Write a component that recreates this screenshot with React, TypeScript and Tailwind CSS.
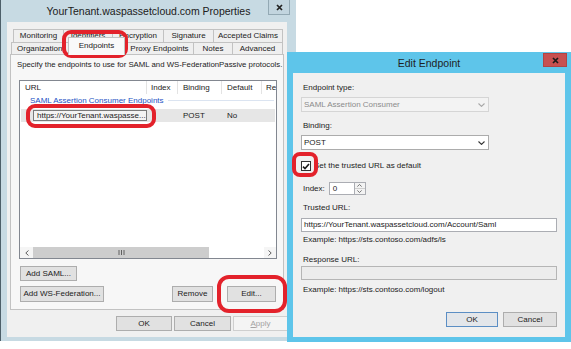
import clsx from "clsx";
import type { ReactNode } from "react";

function CloseGlyph({ className }: { className?: string }) {
  return (
    <svg width="7" height="7" viewBox="0 0 7 7" className={className}>
      <path d="M1 1 L6 6 M6 1 L1 6" stroke="currentColor" strokeWidth="1.7" />
    </svg>
  );
}

function Chevron({ className, up }: { className?: string; up?: boolean }) {
  return (
    <svg width="7" height="4" viewBox="0 0 7 4" className={className}>
      <path
        d={up ? "M0.5 3.5 L3.5 0.6 L6.5 3.5" : "M0.5 0.5 L3.5 3.4 L6.5 0.5"}
        fill="none"
        stroke="currentColor"
        strokeWidth="1.1"
      />
    </svg>
  );
}

function WinButton({
  children,
  className,
  disabled,
  isDefault,
}: {
  children: ReactNode;
  className?: string;
  disabled?: boolean;
  isDefault?: boolean;
}) {
  return (
    <div
      className={clsx(
        "flex h-[15px] shrink-0 items-center justify-center border text-[8px] leading-none",
        isDefault ? "border-[#5b8ec4] bg-[#e3e6ea]" : "border-[#adadad] bg-[#e1e1e1]",
        disabled ? "border-[#cfcfcf] bg-[#f4f4f4] text-[#a3a3a3]" : "text-[#1b1b1b]",
        className
      )}
    >
      {children}
    </div>
  );
}

function Tab({ label, className, active }: { label: string; className?: string; active?: boolean }) {
  return (
    <div
      className={clsx(
        "flex shrink-0 items-center justify-center overflow-hidden whitespace-nowrap border-l border-t border-[#c2c2c2] text-[8px] leading-none",
        active ? "relative z-10 -mb-px h-[18px] border-r bg-[#f9f9f9] pb-[2px]" : "h-full bg-[#efefef]",
        className
      )}
    >
      {label}
    </div>
  );
}

function Select({ value, disabled }: { value: string; disabled?: boolean }) {
  return (
    <div
      className={clsx(
        "flex h-[15px] w-[188px] items-center justify-between border pl-[2px] pr-[3px]",
        disabled ? "border-[#d5d5d5] bg-[#f3f3f3] text-[#8b8b8b]" : "border-[#acacac] bg-white text-[#1b1b1b]"
      )}
    >
      <span>{value}</span>
      <Chevron className={disabled ? "text-[#a8a8a8]" : "text-[#333]"} />
    </div>
  );
}

function PropertiesWindow() {
  return (
    <div className="absolute left-0 top-0 flex h-[341px] w-[296px] flex-col border-l border-[#4d5f69] bg-[#c7dae3]">
      <div className="relative flex h-[22px] shrink-0 items-center justify-center text-[10.5px] text-[#202020]">
        YourTenant.waspassetcloud.com Properties
        <div className="absolute right-[6px] top-0 flex h-[15px] w-[22px] items-center justify-center border border-t-0 border-[#93a9b4] bg-[#c2d5df] text-[#222]">
          <CloseGlyph />
        </div>
      </div>

      <div className="ml-[6px] h-[315px] w-[280px] bg-[#f0f0f0] pt-[7px]">
        <div className="ml-[6px] flex h-[13px]">
          <Tab label="Monitoring" className="w-[50px]" />
          <Tab label="Identifiers" className="w-[49px]" />
          <Tab label="Encryption" className="w-[51px]" />
          <Tab label="Signature" className="w-[50px]" />
          <Tab label="Accepted Claims" className="w-[70px] border-r" />
        </div>
        <div className="ml-[4px] flex h-[12px] items-end">
          <Tab label="Organization" className="w-[57px] justify-start pl-[5px]" />
          <Tab label="Endpoints" active className="w-[57px]" />
          <Tab label="Proxy Endpoints" className="w-[68px]" />
          <Tab label="Notes" className="w-[39px]" />
          <Tab label="Advanced" className="w-[51px] border-r" />
        </div>

        <div className="ml-[3px] flex h-[256px] w-[274px] flex-col border border-[#c2c2c2] bg-[#f7f7f7] pl-[6px] pt-[5px]">
          <div className="whitespace-nowrap text-[7.8px]">
            Specify the endpoints to use for SAML and WS-FederationPassive protocols.
          </div>

          <div className="ml-[2px] mt-[10px] flex h-[179px] w-[258px] flex-col border border-[#828790] bg-white">
            <div className="flex h-[13px] shrink-0">
              <div className="flex w-[127px] items-center border-r border-[#e3e3e3] pl-[5px]">URL</div>
              <div className="flex w-[31px] items-center border-r border-[#e3e3e3] pl-[4px]">Index</div>
              <div className="flex w-[44px] items-center border-r border-[#e3e3e3] pl-[5px]">Binding</div>
              <div className="flex w-[40px] items-center border-r border-[#e3e3e3] pl-[5px]">Default</div>
              <div className="flex flex-1 items-center overflow-hidden pl-[4px]">Re</div>
            </div>
            <div className="flex h-[13px] shrink-0 items-center pl-[10px]">
              <span className="whitespace-nowrap text-[#2553c4]">SAML Assertion Consumer Endpoints</span>
              <div className="ml-[4px] mr-[2px] h-px flex-1 bg-[#dbe4f1]" />
            </div>
            <div className="mx-px mt-[2px] flex h-[13px] shrink-0 items-center bg-[#e6e6e6]">
              <div className="flex w-[126px] items-center pl-[12px]">
                <div className="flex h-[11px] w-[114px] items-center border border-[#7a7a7a] bg-[#f3f3f3] pl-[3px]">
                  https://YourTenant.waspasse...
                </div>
              </div>
              <div className="w-[31px]" />
              <div className="w-[44px] pl-[5px]">POST</div>
              <div className="w-[40px] pl-[5px]">No</div>
            </div>
            <div className="flex-1" />
            <div className="flex h-[11px] shrink-0 bg-[#f5f5f5]">
              <div className="flex w-[13px] items-center justify-center text-[#606060]">
                <svg width="4" height="6" viewBox="0 0 4 6">
                  <path d="M3.5 0.5 L0.8 3 L3.5 5.5" fill="none" stroke="currentColor" strokeWidth="1" />
                </svg>
              </div>
              <div className="flex w-[176px] items-center justify-center bg-[#cdcdcd]">
                <svg width="7" height="5" viewBox="0 0 7 5">
                  <path d="M1 0 V5 M3.5 0 V5 M6 0 V5" stroke="#606060" strokeWidth="1" />
                </svg>
              </div>
              <div className="flex-1 bg-white" />
              <div className="flex w-[12px] items-center justify-center text-[#606060]">
                <svg width="4" height="6" viewBox="0 0 4 6">
                  <path d="M0.5 0.5 L3.2 3 L0.5 5.5" fill="none" stroke="currentColor" strokeWidth="1" />
                </svg>
              </div>
            </div>
          </div>

          <WinButton className="ml-[3px] mt-[7px] w-[57px]">Add SAML...</WinButton>
          <div className="ml-[3px] mt-[5px] flex">
            <WinButton className="h-[16px] w-[84px]">Add WS-Federation...</WinButton>
            <WinButton className="ml-[68px] h-[16px] w-[41px]">Remove</WinButton>
            <WinButton className="ml-[14px] h-[16px] w-[49px]">Edit...</WinButton>
          </div>
        </div>

        <div className="mt-[6px] flex gap-[2px] pl-[109px]">
          <WinButton className="w-[56px]">OK</WinButton>
          <WinButton className="w-[57px]">Cancel</WinButton>
          <WinButton disabled className="w-[55px]">
            <span>
              <span className="underline">A</span>pply
            </span>
          </WinButton>
        </div>
      </div>
    </div>
  );
}

function EditEndpointWindow() {
  return (
    <div className="absolute left-[287px] top-[52px] flex h-[290px] w-[284px] flex-col bg-[#5ec5ea]">
      <div className="relative flex h-[21px] shrink-0 items-center justify-center text-[10.5px] text-[#1f1f1f]">
        Edit Endpoint
        <div className="absolute right-[4px] top-[1px] flex h-[14px] w-[24px] items-center justify-center border border-[#b04444] bg-[#c75050] text-[#1a1a1a]">
          <CloseGlyph />
        </div>
      </div>

      <div className="mx-[6px] flex h-[264px] flex-col bg-[#f0f0f0] pl-[8px] pt-[10px]">
        <div className="ml-[2px]">Endpoint type:</div>
        <div className="mt-[4px]">
          <Select value="SAML Assertion Consumer" disabled />
        </div>
        <div className="ml-[2px] mt-[9px]">Binding:</div>
        <div className="mt-[4px]">
          <Select value="POST" />
        </div>

        <div className="mt-[11px] flex h-[10px] items-center">
          <div className="flex h-[10px] w-[10px] items-center justify-center border border-[#333] bg-white">
            <svg width="8" height="7" viewBox="0 0 8 7">
              <path d="M1 3.6 L3 5.6 L7 1" fill="none" stroke="#1a1a1a" strokeWidth="1.6" />
            </svg>
          </div>
          <span className="ml-[3px]">Set the trusted URL as default</span>
        </div>

        <div className="mt-[11px] flex h-[13px] items-center">
          <span className="ml-[2px]">Index:</span>
          <div className="ml-[4px] flex h-[13px] w-[26px] items-center border border-[#abadb3] bg-white pl-[3px]">0</div>
          <div className="flex h-[13px] w-[11px] flex-col border border-l-0 border-[#abadb3] bg-[#f3f3f3] text-[#555]">
            <div className="flex flex-1 items-center justify-center border-b border-[#cfcfcf]">
              <Chevron up className="h-[3px] w-[5px]" />
            </div>
            <div className="flex flex-1 items-center justify-center">
              <Chevron className="h-[3px] w-[5px]" />
            </div>
          </div>
        </div>

        <div className="ml-[2px] mt-[8px]">Trusted URL:</div>
        <div className="mt-[5px] flex h-[14px] w-[256px] items-center border border-[#abadb3] bg-white pl-[2px]">
          https://YourTenant.waspassetcloud.com/Account/Saml
        </div>
        <div className="ml-[2px] mt-[3px]">Example: https://sts.contoso.com/adfs/ls</div>

        <div className="ml-[2px] mt-[10px]">Response URL:</div>
        <div className="mt-[1px] h-[14px] w-[256px] border border-[#b5b5b5] bg-[#ececec]" />
        <div className="ml-[2px] mt-[5px]">Example: https://sts.contoso.com/logout</div>

        <div className="mt-[17px] flex justify-end gap-[5px] pr-[8px]">
          <WinButton isDefault className="w-[52px]">OK</WinButton>
          <WinButton className="w-[54px]">Cancel</WinButton>
        </div>
      </div>
    </div>
  );
}

export default function App() {
  return (
    <div className="relative h-[349px] w-[571px] overflow-hidden bg-white font-['Liberation_Sans',Arial,sans-serif] text-[8px] leading-[10px] text-[#1b1b1b]">
      <PropertiesWindow />
      <EditEndpointWindow />

      {/* red highlight marks drawn over the screenshot */}
      <div className="pointer-events-none absolute left-[62px] top-[30px] h-[28px] w-[66px] rounded-[9px] border-[4px] border-[#e3222b]" />
      <div className="pointer-events-none absolute left-[26px] top-[104px] h-[24px] w-[130px] rounded-[9px] border-[4px] border-[#e3222b]" />
      <div className="pointer-events-none absolute left-[217px] top-[275px] h-[38px] w-[70px] rounded-[12px] border-[4px] border-[#e3222b]" />
      <div className="pointer-events-none absolute left-[292px] top-[152px] h-[25px] w-[26px] rounded-[8px] border-[4px] border-[#e3222b]" />
    </div>
  );
}
